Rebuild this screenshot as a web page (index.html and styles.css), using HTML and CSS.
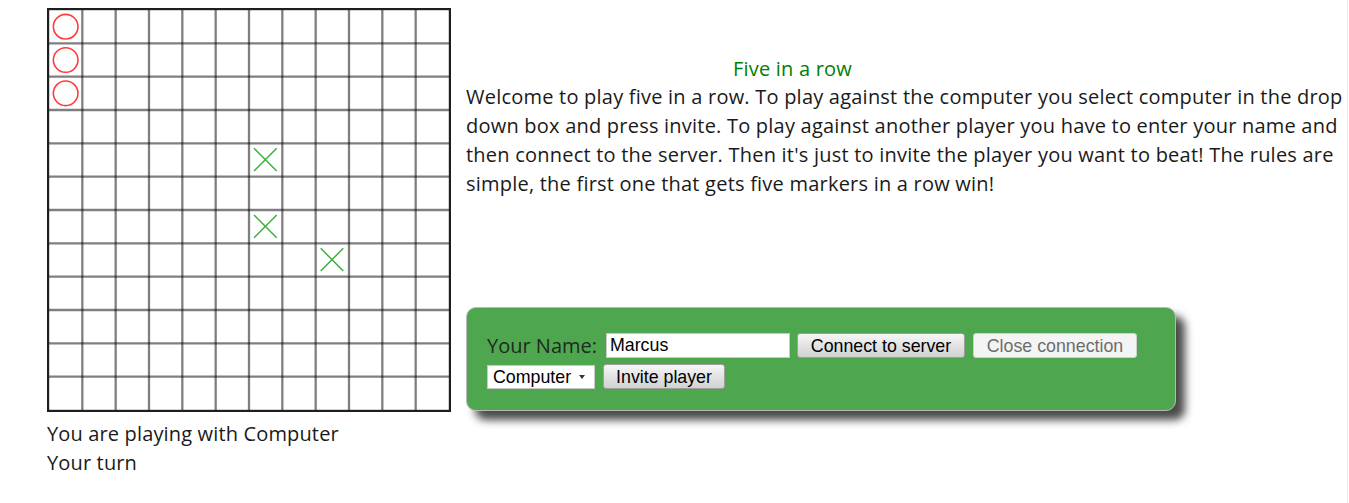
FILE: index.html
```html
<!DOCTYPE html>
<html lang="en">
<head>
<meta charset="utf-8">
<title>Five in a row</title>
<link rel="stylesheet" href="styles.css">
</head>
<body>
<div class="page">
  <div class="left">
    <svg class="board" width="404" height="404" viewBox="0 0 404 404" xmlns="http://www.w3.org/2000/svg">
      <g class="grid" stroke="rgba(0,0,0,0.5)" stroke-width="2.3">
        <line x1="35.33" y1="2" x2="35.33" y2="402"/>
        <line x1="68.67" y1="2" x2="68.67" y2="402"/>
        <line x1="102" y1="2" x2="102" y2="402"/>
        <line x1="135.33" y1="2" x2="135.33" y2="402"/>
        <line x1="168.67" y1="2" x2="168.67" y2="402"/>
        <line x1="202" y1="2" x2="202" y2="402"/>
        <line x1="235.33" y1="2" x2="235.33" y2="402"/>
        <line x1="268.67" y1="2" x2="268.67" y2="402"/>
        <line x1="302" y1="2" x2="302" y2="402"/>
        <line x1="335.33" y1="2" x2="335.33" y2="402"/>
        <line x1="368.67" y1="2" x2="368.67" y2="402"/>
        <line y1="35.33" x1="2" y2="35.33" x2="402"/>
        <line y1="68.67" x1="2" y2="68.67" x2="402"/>
        <line y1="102" x1="2" y2="102" x2="402"/>
        <line y1="135.33" x1="2" y2="135.33" x2="402"/>
        <line y1="168.67" x1="2" y2="168.67" x2="402"/>
        <line y1="202" x1="2" y2="202" x2="402"/>
        <line y1="235.33" x1="2" y2="235.33" x2="402"/>
        <line y1="268.67" x1="2" y2="268.67" x2="402"/>
        <line y1="302" x1="2" y2="302" x2="402"/>
        <line y1="335.33" x1="2" y2="335.33" x2="402"/>
        <line y1="368.67" x1="2" y2="368.67" x2="402"/>
      </g>
      <rect x="1" y="1" width="402" height="402" fill="none" stroke="#1e1e1e" stroke-width="2.4"/>
      <g fill="none" stroke="#ff3b3b" stroke-width="1.6">
        <circle cx="18.67" cy="18.67" r="12.3"/>
        <circle cx="18.67" cy="52" r="12.3"/>
        <circle cx="18.67" cy="85.33" r="12.3"/>
      </g>
      <g stroke="#3fae3f" stroke-width="1.5">
        <path d="M207 140.3 L229.7 163 M229.7 140.3 L207 163"/>
        <path d="M207 207 L229.7 229.7 M229.7 207 L207 229.7"/>
        <path d="M273.7 240.3 L296.3 263 M296.3 240.3 L273.7 263"/>
      </g>
    </svg>
    <div class="status">
      <div>You are playing with Computer</div>
      <div>Your turn</div>
    </div>
  </div>
  <div class="right">
    <div class="title">Five in a row</div>
    <p class="intro">Welcome to play five in a row. To play against the computer you select computer in the drop down box and press invite. To play against another player you have to enter your name and then connect to the server. Then it's just to invite the player you want to beat! The rules are simple, the first one that gets five markers in a row win!</p>
    <div class="panel">
      <div class="row">
        <label class="name-label" for="name">Your Name:</label>
        <input class="name-input" id="name" type="text" value="Marcus">
        <button class="btn btn-connect" type="button">Connect to server</button>
        <button class="btn btn-close" type="button" disabled>Close connection</button>
      </div>
      <div class="row row-two">
        <div class="select-wrap">
          <select class="opponent">
            <option>Computer</option>
          </select>
        </div>
        <button class="btn btn-invite" type="button">Invite player</button>
      </div>
    </div>
  </div>
</div>
</body>
</html>
```

FILE: styles.css
```css
html {
  background: #fafafa;
}
body {
  margin: 0;
  padding: 8px 0 0 0;
  width: 1348px;
  min-height: 100vh;
  background: #ffffff;
  border-right: 1px solid #ececec;
  box-sizing: border-box;
  font-family: "Open Sans", "Noto Sans", sans-serif;
  color: #1a1a1a;
}
.page {
  display: flex;
  align-items: flex-start;
}
.left {
  margin-left: 47px;
  width: 404px;
}
.board {
  display: block;
}
.status {
  margin-top: 7px;
  font-size: 20px;
  line-height: 29px;
  letter-spacing: 0.15px;
}
.right {
  margin-left: 15px;
  width: 880px;
}
.title {
  width: 653px;
  margin-top: 48px;
  text-align: center;
  color: #008000;
  font-size: 20px;
  line-height: 26px;
  letter-spacing: 0.2px;
}
.intro {
  margin: 0;
  font-size: 20px;
  line-height: 29px;
  letter-spacing: 0.22px;
}
.panel {
  margin-top: 109px;
  width: 710px;
  height: 104px;
  box-sizing: border-box;
  border: 1px solid #b9b9b9;
  border-radius: 10px;
  background: #4ea74e;
  box-shadow: 9px 9px 9px #4a4a4a;
  padding: 25px 20px 0 20px;
}
.row {
  display: flex;
  align-items: center;
  height: 25px;
}
.row-two {
  margin-top: 6px;
}
.name-label {
  font-size: 20px;
  color: #1f2a1f;
  width: 119px;
}
.name-input {
  width: 184px;
  height: 25px;
  box-sizing: border-box;
  border: 1px solid #c9c9c9;
  background: #fff;
  font-family: "Liberation Sans", Arial, sans-serif;
  font-size: 17.8px;
  padding: 0 3px;
  color: #000;
  margin: 0;
}
.btn {
  height: 25px;
  box-sizing: border-box;
  border: 1px solid #9e9e9e;
  border-radius: 3px;
  background: linear-gradient(#f7f7f7, #e1e1e1 55%, #d2d2d2);
  font-family: "Liberation Sans", Arial, sans-serif;
  font-size: 17.8px;
  line-height: 23px;
  color: #000;
  padding: 1px 0 0 0;
  margin: 0;
}
.btn-connect {
  width: 168px;
  margin-left: 7px;
}
.btn-close {
  width: 164px;
  margin-left: 8px;
  background: #f4f4f4;
  border-color: #cfcfcf;
  color: #6d6d6d;
}
.select-wrap {
  position: relative;
  width: 108px;
  height: 24px;
}
.opponent {
  appearance: none;
  -webkit-appearance: none;
  width: 108px;
  height: 24px;
  box-sizing: border-box;
  border: 1px solid #c9c9c9;
  border-radius: 0;
  background: #fff;
  font-family: "Liberation Sans", Arial, sans-serif;
  font-size: 17.8px;
  color: #000;
  padding: 1px 0 0 5px;
  margin: 0;
}
.select-wrap::after {
  content: "";
  position: absolute;
  right: 10px;
  top: 10px;
  border-left: 3.5px solid transparent;
  border-right: 3.5px solid transparent;
  border-top: 4px solid #333;
}
.btn-invite {
  width: 122px;
  margin-left: 8px;
}
```
